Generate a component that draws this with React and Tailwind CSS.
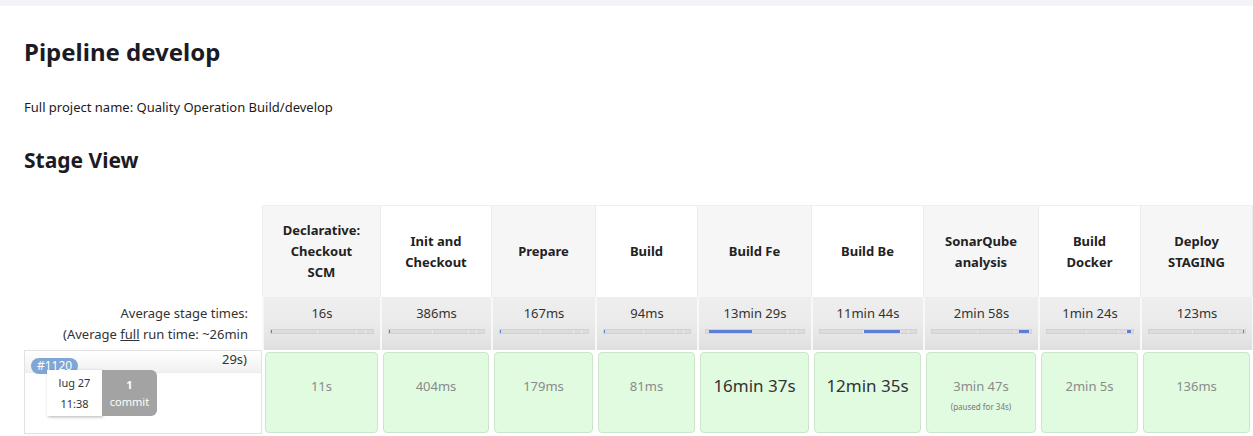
const stages = [
  { name: ["Declarative:", "Checkout", "SCM"], w: 118, bg: "bg-[#f6f6f6]", avg: "16s", run: "11s", bar: [0, 1] },
  { name: ["Init and", "Checkout"], w: 111, bg: "bg-white", avg: "386ms", run: "404ms", bar: [0, 1] },
  { name: ["Prepare"], w: 104, bg: "bg-[#f6f6f6]", avg: "167ms", run: "179ms", bar: [0, 1] },
  { name: ["Build"], w: 102, bg: "bg-white", avg: "94ms", run: "81ms", bar: [0, 1] },
  { name: ["Build Fe"], w: 114, bg: "bg-[#f6f6f6]", avg: "13min 29s", run: "16min 37s", bar: [3, 44], big: true },
  { name: ["Build Be"], w: 112, bg: "bg-white", avg: "11min 44s", run: "12min 35s", bar: [46, 37], big: true },
  { name: ["SonarQube", "analysis"], w: 115, bg: "bg-[#f6f6f6]", avg: "2min 58s", run: "3min 47s", bar: [88, 10], paused: "(paused for 34s)" },
  { name: ["Build", "Docker"], w: 102, bg: "bg-white", avg: "1min 24s", run: "2min 5s", bar: [93, 5] },
  { name: ["Deploy", "STAGING"], w: 112, bg: "bg-[#f6f6f6]", avg: "123ms", run: "136ms", bar: [98, 1] },
  { name: [""], w: 60, bg: "bg-white", avg: "", run: "", bar: null },
];

function Bar({ bar }) {
  if (!bar) return null;
  return (
    <div className="relative mx-[6px] h-[5px] bg-[#dcdcdc] border border-[#d2d2d2]">
      <div className="absolute top-0 bottom-0 left-[45%] w-px bg-[#ececec]" />
      <div className="absolute top-0 bottom-0 left-[83%] w-px bg-[#ececec]" />
      <div className="absolute top-0 bottom-0 left-[92%] w-px bg-[#ececec]" />
      <div
        className="absolute top-0 bottom-0 bg-[#5c7fd6]"
        style={{ left: bar[0] + "%", width: bar[1] + "%" }}
      />
    </div>
  );
}

export default function App() {
  return (
    <div className="min-h-screen bg-white text-[#1b1b24] overflow-hidden" style={{ fontFamily: '"Noto Sans", sans-serif' }}>
      <div className="h-[6px] bg-[#f4f4f8]" />
      <div className="pl-6">
        <h1 className="mt-[30px] text-[24px] font-bold leading-8">Pipeline develop</h1>
        <p className="mt-[29px] text-[13px] leading-5">Full project name: Quality Operation Build/develop</p>
        <h2 className="mt-[29px] text-[21px] font-bold leading-7">Stage View</h2>

        <div className="mt-[31px] flex w-[1400px]">
          <div className="w-[238px] shrink-0 flex flex-col">
            <div className="h-[92px]" />
            <div className="h-[53px] pr-[14px] pt-[6px] text-right text-[13px] leading-[21px] text-[#333]">
              <div>Average stage times:</div>
              <div>(Average <span className="underline">full</span> run time: ~26min</div>
            </div>
            <div className="relative h-[84px] border border-[#e2e2e2] bg-white">
              <div className="h-[22px] bg-gradient-to-b from-white to-[#f1f1f1] border-b border-[#ececec]" />
              <div className="absolute right-[14px] top-[-2px] text-[13px] leading-[21px] text-[#333]">29s)</div>
              <div className="absolute left-[6px] top-[7px] rounded-full bg-[#7fa6d4] px-[6px] text-[12px] leading-4 text-white">#1120</div>
              <div className="absolute left-[22px] top-[19px] flex h-[46px] text-[11px]">
                <div className="w-[55px] bg-white shadow-[1px_1px_3px_rgba(0,0,0,0.3)] flex flex-col items-center justify-center gap-[5px] leading-4 text-[#333]">
                  <div>lug 27</div>
                  <div>11:38</div>
                </div>
                <div className="w-[55px] rounded-r-md bg-[#a3a3a3] flex flex-col items-center justify-center leading-[17px] text-white">
                  <div className="font-bold">1</div>
                  <div>commit</div>
                </div>
              </div>
            </div>
          </div>

          <div className="flex flex-col border-t border-[#efefef]">
            <div className="flex h-[91px]">
              {stages.map((s, i) => (
                <div key={i} style={{ width: s.w }} className={`shrink-0 border-l border-[#ececec] ${s.bg} flex flex-col items-center justify-center text-center text-[13px] font-bold leading-[21px] text-[#222]`}>
                  {s.name.map((l, j) => (
                    <div key={j}>{l}</div>
                  ))}
                </div>
              ))}
            </div>
            <div className="flex h-[53px]">
              {stages.map((s, i) => (
                <div key={i} style={{ width: s.w }} className="shrink-0 border-l-2 border-[#f8f8f8] bg-gradient-to-b from-[#eeeeee] via-[#ebebeb] to-[#dfdfdf] pt-[6px]">
                  <div className="h-[21px] text-center text-[13px] leading-[21px] text-[#333]">{s.avg}</div>
                  <div className="mt-[5px]">
                    <Bar bar={s.bar} />
                  </div>
                </div>
              ))}
            </div>
            <div className="flex h-[85px]">
              {stages.map((s, i) => (
                <div key={i} style={{ width: s.w }} className="shrink-0 p-[2px] pl-[3px]">
                  {s.run && (
                    <div className={`h-full rounded-[4px] border border-[#cbe6cb] bg-[#e1fbe1] flex flex-col items-center ${s.big ? "pt-[21px]" : "pt-[24px]"}`}>
                      <div className={s.big ? "text-[17px] leading-6 text-[#333]" : "text-[13px] leading-[18px] text-[#8a8a8a]"}>{s.run}</div>
                      {s.paused && <div className="mt-[6px] text-[8px] leading-3 text-[#777]">{s.paused}</div>}
                    </div>
                  )}
                </div>
              ))}
            </div>
          </div>
        </div>
      </div>
    </div>
  );
}
